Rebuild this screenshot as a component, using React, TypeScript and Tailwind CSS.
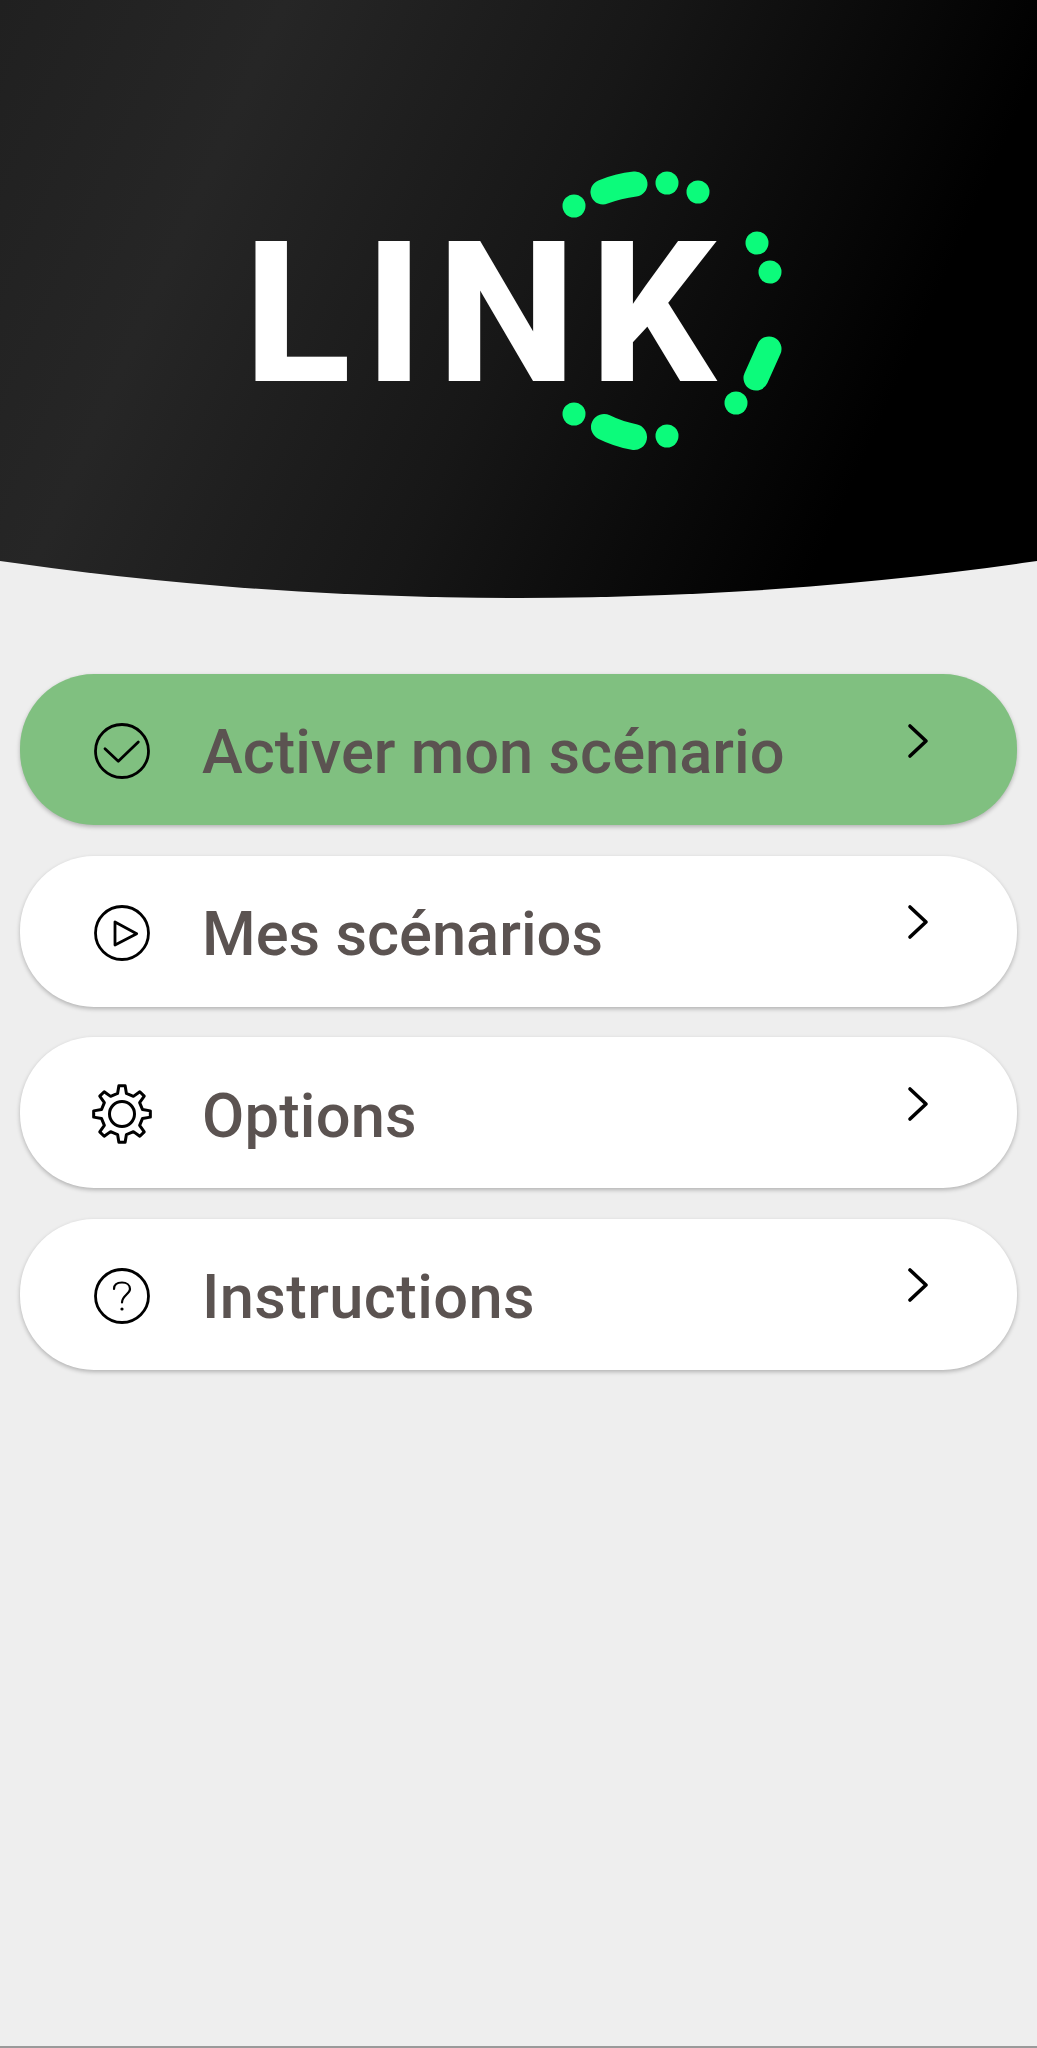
import type { ReactNode } from 'react'

// 8 tooth gear outline, centred on 30,30
function gearPath() {
  const teeth = 8
  const pts: string[] = []
  for (let i = 0; i < teeth; i++) {
    const a = (i / teeth) * Math.PI * 2 - Math.PI / 2
    const step = (Math.PI * 2) / teeth
    const list: [number, number][] = [
      [21, a - step * 0.27],
      [28.5, a - step * 0.14],
      [28.5, a + step * 0.14],
      [21, a + step * 0.27],
    ]
    list.forEach(([r, t]) => {
      pts.push(`${(30 + r * Math.cos(t)).toFixed(2)} ${(30 + r * Math.sin(t)).toFixed(2)}`)
    })
  }
  return 'M' + pts.join(' L') + ' Z'
}

function IconBox({ children }: { children: ReactNode }) {
  return (
    <svg width="60" height="60" viewBox="0 0 60 60" fill="none" stroke="#000" strokeWidth="2.8" strokeLinecap="round" strokeLinejoin="round" className="shrink-0 mt-[3px]">
      {children}
    </svg>
  )
}

const CheckIcon = () => (
  <IconBox>
    <circle cx="30" cy="30" r="26.5" />
    <path d="M13 27.7 L26.3 40.3 L46.3 21" />
  </IconBox>
)

const PlayIcon = () => (
  <IconBox>
    <circle cx="30" cy="30" r="26.5" />
    <path d="M23 19 L23 42 L44.7 30.7 Z" />
  </IconBox>
)

const GearIcon = () => (
  <IconBox>
    <path strokeWidth="3" d={gearPath()} />
    <circle cx="30" cy="30" r="12.5" strokeWidth="3" />
  </IconBox>
)

const HelpIcon = () => (
  <IconBox>
    <circle cx="30" cy="30" r="26.5" />
    <path strokeWidth="2.2" d="M22 23 C22 18.5 25.5 16.5 30 16.5 C34.5 16.5 38 19 38 23 C38 28 30 29.5 30 36.5" />
    <circle cx="30" cy="43" r="1.6" fill="#000" stroke="none" />
  </IconBox>
)

const Chevron = () => (
  <svg width="24" height="36" viewBox="0 0 24 36" fill="none" stroke="#000" strokeWidth="3.6" strokeLinecap="round" strokeLinejoin="round" className="shrink-0 mb-[18px]">
    <path d="M5 3 L21 18 L5 33" />
  </svg>
)

const items = [
  { label: 'Activer mon scénario', icon: <CheckIcon />, active: true, tracking: '' },
  { label: 'Mes scénarios', icon: <PlayIcon />, active: false, tracking: '' },
  { label: 'Options', icon: <GearIcon />, active: false, tracking: 'tracking-[0.2px]' },
  { label: 'Instructions', icon: <HelpIcon />, active: false, tracking: 'tracking-[0.4px]' },
]

function Logo() {
  return (
    <div className="relative w-[557px]">
      <div className="font-['Roboto',sans-serif] font-extrabold text-[197px] leading-none tracking-[14px] text-white pl-[4px]">LINK</div>
      <svg className="absolute left-0 -top-[60px] w-[557px] h-[300px]" viewBox="240 155 557 300" fill="#0cfb7b" stroke="none">
        <circle cx="574" cy="206" r="11.5" />
        <path d="M603 192 Q618 186 635 184" fill="none" stroke="#0cfb7b" strokeWidth="25" strokeLinecap="round" />
        <circle cx="667" cy="183" r="11.5" />
        <circle cx="698" cy="192" r="11.5" />
        <circle cx="757" cy="243" r="11.5" />
        <circle cx="770" cy="272" r="11.5" />
        <path d="M769 349 L756 378" fill="none" stroke="#0cfb7b" strokeWidth="25" strokeLinecap="round" />
        <circle cx="736" cy="403" r="11.5" />
        <circle cx="574" cy="414" r="11.5" />
        <path d="M604 427 Q618 434 634 437" fill="none" stroke="#0cfb7b" strokeWidth="26" strokeLinecap="round" />
        <circle cx="667" cy="436" r="11.5" />
      </svg>
    </div>
  )
}

export default function App() {
  return (
    <div className="min-h-[2048px] flex flex-col bg-[#eeeeee] font-['Roboto',sans-serif]">
      <header className="h-[598px] shrink-0 flex justify-center pt-[215px] bg-[linear-gradient(114deg,#202020_0%,#262626_22%,#171717_50%,#000000_82%)] [clip-path:ellipse(1495px_598px_at_50%_0)]">
        <Logo />
      </header>

      <nav className="flex flex-col gap-[30.6px] px-5 pt-[76px]">
        {items.map(item => (
          <div
            key={item.label}
            className={`h-[151px] rounded-[74px] flex items-center pl-[72px] pr-[88px] gap-[50px] shadow-[0_2px_4px_rgba(0,0,0,0.25)] ${item.active ? 'bg-[#80c080]' : 'bg-white'}`}
          >
            {item.icon}
            <span className={`flex-1 pt-[6px] text-[61.4px] font-medium text-[#5b5351] ${item.tracking}`}>{item.label}</span>
            <Chevron />
          </div>
        ))}
      </nav>

      <div className="mt-auto h-[2px] bg-[#9a9a9a]" />
    </div>
  )
}
